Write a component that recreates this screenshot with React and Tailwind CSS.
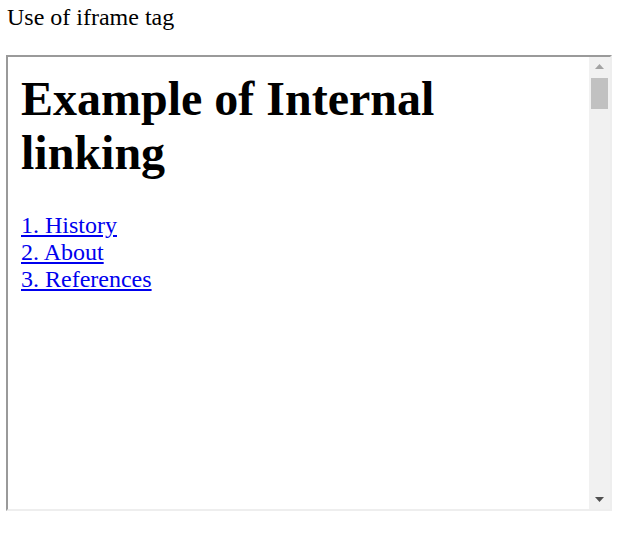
export default function App() {
  return (
    <div className="bg-white w-[632px] h-[538px] font-['Liberation_Serif',serif] text-black text-[24px] leading-[27px]">
      <div className="pl-[7px] pt-[4px]">Use of iframe tag</div>
      <div className="ml-[6px] mt-[24px] w-[606px] h-[456px] flex border-2 border-t-[#9a9a9a] border-l-[#9a9a9a] border-b-[#eeeeee] border-r-[#eeeeee]">
        <div className="flex-1 bg-white pl-[13px] pt-[15px]">
          <h1 className="font-bold text-[48px] leading-[54px] w-[520px]">Example of Internal linking</h1>
          <div className="mt-[32px] flex flex-col text-[24px] leading-[27px]">
            <a href="#" className="text-[#0000ee] underline self-start">1. History</a>
            <a href="#" className="text-[#0000ee] underline self-start">2. About</a>
            <a href="#" className="text-[#0000ee] underline self-start">3. References</a>
          </div>
        </div>
        <div className="w-[21px] bg-[#f1f1f1] flex flex-col items-center">
          <div className="h-[19px] flex items-center justify-center">
            <svg width="9" height="5" viewBox="0 0 9 5"><polygon points="4.5,0 9,5 0,5" fill="#a3a3a3" /></svg>
          </div>
          <div className="w-[17px] h-[31px] bg-[#c1c1c1] mt-[2px]" />
          <div className="flex-1" />
          <div className="h-[19px] flex items-center justify-center">
            <svg width="9" height="5" viewBox="0 0 9 5"><polygon points="0,0 9,0 4.5,5" fill="#505050" /></svg>
          </div>
        </div>
      </div>
    </div>
  );
}
